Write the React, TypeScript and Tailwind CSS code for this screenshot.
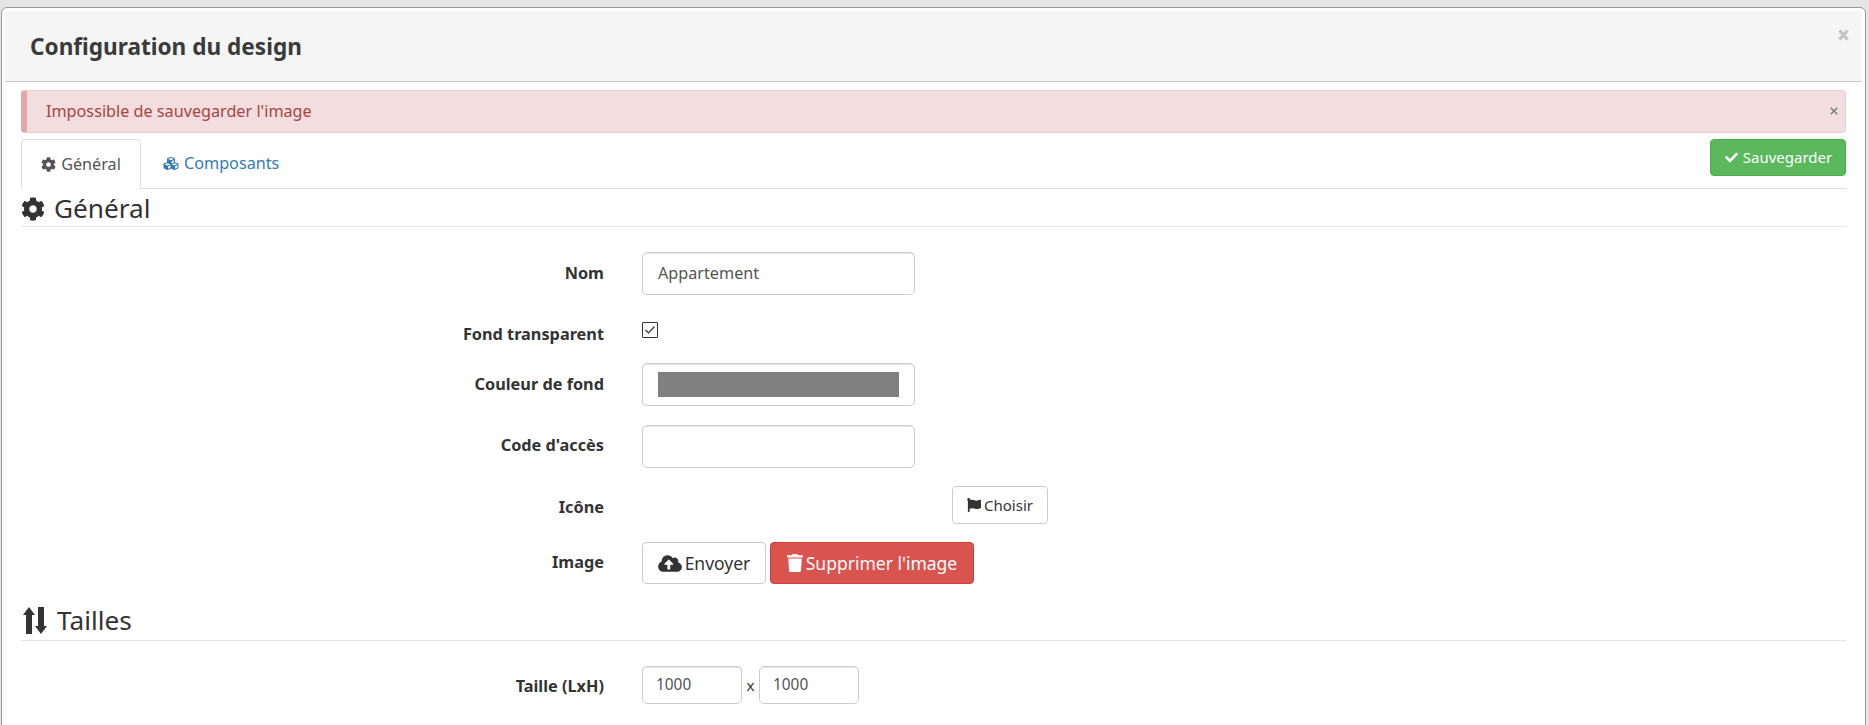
import { FaCog, FaCubes, FaFlag, FaCheck, FaCloudUploadAlt, FaTrash } from "react-icons/fa";

function Arrows() {
  return (
    <svg viewBox="0 0 24 27" className="ml-[2px] w-[24px] h-[27px] shrink-0 fill-[#333]">
      <path d="M6 0l6 8H9V27H3V8H0z" />
      <path d="M18 27l-6-8h3V0h6v19h3z" />
    </svg>
  );
}

function Row({ label, className, labelClass, children }: { label: string; className: string; labelClass?: string; children: React.ReactNode }) {
  return (
    <div className={"flex " + className}>
      <div className={"flex w-[583px] shrink-0 items-center justify-end text-[16.3px] font-bold leading-[20px] text-[#333] " + (labelClass ?? "")}>{label}</div>
      <div className="ml-[38px] flex items-start">{children}</div>
    </div>
  );
}

const inputCls = "rounded-[5px] border border-[#ccc] shadow-[inset_0_1px_1px_rgba(0,0,0,0.1)]";

export default function App() {
  return (
    <div className="h-[725px] overflow-hidden bg-[#e5e5e5] pt-[7px] pl-[1px] pr-[3px] font-['Noto_Sans',sans-serif] text-[14px] text-[#333]">
      <div className="h-[800px] rounded-t-[6px] border border-[#999] bg-white p-[3px]">
        <div className="relative h-[71px] rounded-t-[4px] border-b border-[#ccc] bg-[#f5f5f5] pl-[25px] pt-[21px]">
          <h1 className="text-[22.6px] font-bold leading-[30px] text-[#3a3a3a]">Configuration du design</h1>
          <svg viewBox="0 0 11 12" className="absolute right-[13px] top-[18px] w-[11px] h-[12px] stroke-[#c4c4c4] stroke-[3.2]">
            <path d="M1.5 1.5l8 9M9.5 1.5l-8 9" />
          </svg>
        </div>
        <div className="px-[16px] pt-[8px]">
          <div className="relative flex h-[43px] items-center rounded-[4px] border border-[#ebccd1] border-l-[6px] border-l-[#e0a8a8] bg-[#f2dede] pb-[1px] pl-[19px] text-[16.2px] text-[#a94442]">
            Impossible de sauvegarder l'image
            <svg viewBox="0 0 8 8" className="absolute right-[7px] top-[16px] w-[8px] h-[8px] stroke-[#777] stroke-[1.4]">
              <path d="M.7.7l6.6 6.6M7.3.7L.7 7.3" />
            </svg>
          </div>
          <div className="relative mt-[6px] flex h-[50px] border-b border-[#ddd]">
            <div className="z-10 flex h-[50px] w-[120px] items-center justify-center gap-[5px] rounded-t-[4px] border border-b-0 border-[#ddd] bg-white pb-[1px] text-[16.2px] text-[#555]">
              <FaCog className="w-[15px] h-[15px]" />
              <span>Général</span>
            </div>
            <div className="ml-[22px] flex h-[49px] items-center gap-[5px] pb-[1px] text-[16.2px] text-[#337ab7]">
              <FaCubes className="w-[16px] h-[15px]" />
              <span>Composants</span>
            </div>
            <div className="absolute right-0 top-0 flex h-[37px] w-[136px] items-center justify-center gap-[4px] rounded-[4px] border border-[#4cae4c] bg-[#5cb85c] text-[15px] text-white">
              <FaCheck className="w-[15px] h-[13px]" />
              <span>Sauvegarder</span>
            </div>
          </div>
          <div className="flex h-[38px] items-center gap-[9px] border-b border-[#e5e5e5] pt-[2px] text-[26.2px] text-[#333]">
            <FaCog className="w-[24px] h-[24px]" />
            <span>Général</span>
          </div>

          <Row label="Nom" className="mt-[25px] h-[43px]" labelClass="pb-[2px]">
            <div className={"flex h-[43px] w-[273px] items-center pb-[1px] pl-[15px] text-[16.2px] text-[#555] " + inputCls}>Appartement</div>
          </Row>
          <Row label="Fond transparent" className="mt-[27px] h-[16px]" labelClass="pt-[8px]">
            <div className="flex h-[16px] w-[16px] items-center justify-center rounded-[1px] border border-[#333] bg-white">
              <svg viewBox="0 0 10 8" className="w-[10px] h-[8px] fill-none stroke-[#333] stroke-[1.2]">
                <path d="M.5 4l3 3 6-6.5" />
              </svg>
            </div>
          </Row>
          <Row label="Couleur de fond" className="mt-[25px] h-[43px]" labelClass="pb-[2px]">
            <div className={"flex h-[43px] w-[273px] items-center pl-[15px] " + inputCls}>
              <div className="h-[25px] w-[241px] bg-[#808080]" />
            </div>
          </Row>
          <Row label="Code d'accès" className="mt-[19px] h-[43px]" labelClass="pb-[3px]">
            <div className={"h-[43px] w-[273px] " + inputCls} />
          </Row>
          <Row label="Icône" className="mt-[18px] h-[37px]" labelClass="pt-[4px]">
            <div className="ml-[310px] flex h-[38px] w-[96px] items-center justify-center gap-[3px] rounded-[4px] border border-[#ccc] bg-white text-[15px] text-[#333]">
              <FaFlag className="w-[14px] h-[14px]" />
              <span>Choisir</span>
            </div>
          </Row>
          <Row label="Image" className="mt-[19px] h-[42px]" labelClass="pb-[2px]">
            <div className="flex h-[42px] w-[124px] items-center justify-center gap-[3px] rounded-[4px] border border-[#ccc] bg-white text-[17.5px] text-[#333]">
              <FaCloudUploadAlt className="w-[24px] h-[19px]" />
              <span>Envoyer</span>
            </div>
            <div className="ml-[4px] flex h-[42px] w-[204px] items-center justify-center gap-[3px] rounded-[4px] border border-[#d43f3a] bg-[#d9534f] text-[17.5px] text-white">
              <FaTrash className="w-[16px] h-[18px]" />
              <span>Supprimer l'image</span>
            </div>
          </Row>
          <div className="mt-[19px] flex h-[38px] items-center gap-[10px] border-b border-[#e5e5e5] pb-[2px] text-[26.2px] text-[#333]">
            <Arrows />
            <span>Tailles</span>
          </div>
          <Row label="Taille (LxH)" className="mt-[25px] h-[37px]" labelClass="pt-[3px]">
            <div className={"flex h-[38px] w-[100px] items-center pb-[1px] pl-[13px] text-[15.4px] text-[#555] " + inputCls}>1000</div>
            <span className="mx-[4px] w-[9px] pt-[8px] text-center text-[15px] text-[#333]">x</span>
            <div className={"flex h-[38px] w-[100px] items-center pb-[1px] pl-[13px] text-[15.4px] text-[#555] " + inputCls}>1000</div>
          </Row>
        </div>
      </div>
    </div>
  );
}
